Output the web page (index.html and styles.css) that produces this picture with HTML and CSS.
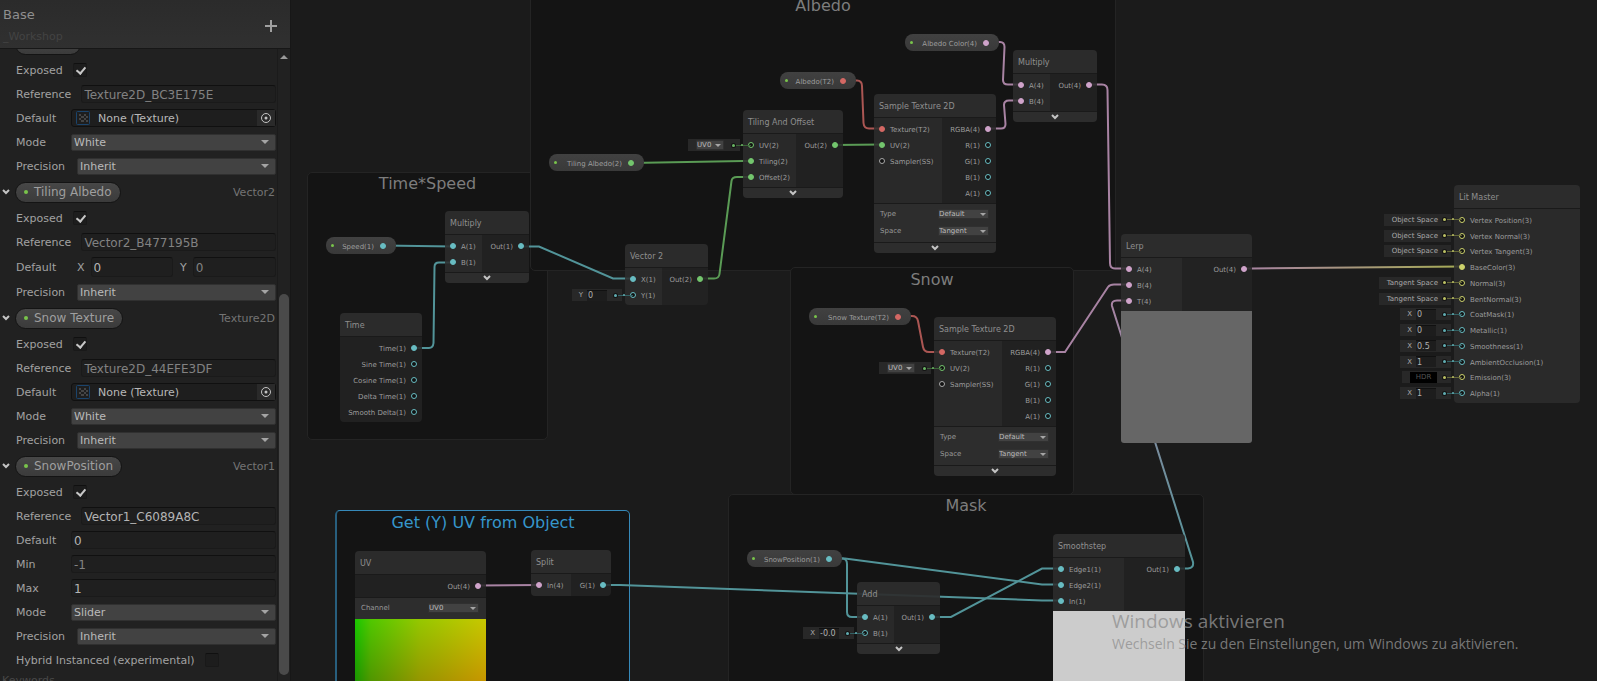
FILE: index.html
```
<!DOCTYPE html>
<html lang="en">
<head>
<meta charset="utf-8">
<title>Shader Graph</title>
<link rel="stylesheet" href="styles.css">
</head>
<body>
<div class="workspace">
<main class="canvas">
  <section class="group g-time"><h2>Time*Speed</h2></section>
  <section class="group g-albedo"><h2>Albedo</h2></section>
  <section class="group g-snow"><h2>Snow</h2></section>
  <section class="group g-mask"><h2>Mask</h2></section>
  <section class="group g-uv selected"><h2>Get (Y) UV from Object</h2></section>

  <svg class="edges" aria-hidden="true">
    <defs>
      <linearGradient id="toYellow" gradientUnits="userSpaceOnUse" x1="1244" y1="0" x2="1462" y2="0"><stop offset="0" stop-color="#a883a3"/><stop offset="1" stop-color="#a5ab55"/></linearGradient>
      <linearGradient id="toPink" gradientUnits="userSpaceOnUse" x1="0" y1="568" x2="0" y2="300"><stop offset="0" stop-color="#529499"/><stop offset="1" stop-color="#a883a3"/></linearGradient>
    </defs>
    <g class="e-teal">
      <path d="M383 245.500L453 246.500"/>
      <path d="M414 348H429Q433 348 433.500 343L434.500 267Q434.500 262.500 439 262.500H453"/>
      <path d="M521 246.500H539L613 278.500H632"/>
      <path d="M603 585H620L1042 600.500H1061"/>
      <path d="M829 558.500H845L1042 584.500H1061"/>
      <path d="M829 558.500H843Q847 559 847 564V612Q847 617 852 617H864"/>
      <path d="M932 617H951L1042 568.500H1061"/>
    </g>
    <g class="e-green">
      <path d="M631 163L743 161H751"/>
      <path d="M834 145L882 144.500"/>
      <path d="M700 278.500H714Q719 278.500 719.500 274L731.500 181Q732 177 737 177H751"/>
    </g>
    <g class="e-red">
      <path d="M843 80.500H857Q862 80.500 862 86L863.500 123Q864 128.500 869 128.500H882"/>
      <path d="M898 316H912Q917 316 918 321L923 347Q924 352 929 352H941"/>
    </g>
    <g class="e-pink">
      <path d="M986 42H1000Q1004.500 42 1004.500 47L1003 80Q1003 84.500 1008 84.500H1021"/>
      <path d="M988 128.500H1001Q1005.500 128.500 1005.500 124L1004 105Q1004 100.500 1009 100.500H1021"/>
      <path d="M1089 84.500H1102Q1107.500 84.500 1107.500 90L1110 263Q1110 268.500 1115 268.500H1128"/>
      <path d="M1047 352H1065L1108 287Q1110 284.500 1114 284.500H1128"/>
      <path d="M478 585.500L538 585"/>
      <path d="M1244 268.500H1252L1462 266.500" stroke="url(#toYellow)"/>
      <path d="M1177 568.500H1188Q1194 568 1193 562L1112 306Q1111 300.500 1117 300.500H1128" stroke="url(#toPink)"/>
    </g>
  </svg>

  <div class="token t-speed teal"><i class="exposed"></i><span>Speed(1)</span><i class="pin on"></i></div>
  <div class="token t-tiling green"><i class="exposed"></i><span>Tiling Albedo(2)</span><i class="pin on"></i></div>
  <div class="token t-albedo red"><i class="exposed"></i><span>Albedo(T2)</span><i class="pin on"></i></div>
  <div class="token t-color pink"><i class="exposed"></i><span>Albedo Color(4)</span><i class="pin on"></i></div>
  <div class="token t-snowtex red"><i class="exposed"></i><span>Snow Texture(T2)</span><i class="pin on"></i></div>
  <div class="token t-snowpos teal"><i class="exposed"></i><span>SnowPosition(1)</span><i class="pin on"></i></div>

  <article class="node n-mul1">
    <h3>Multiply</h3>
    <div class="body">
      <ul class="ins"><li class="teal"><i class="pin on"></i><span>A(1)</span></li><li class="teal"><i class="pin on"></i><span>B(1)</span></li></ul>
      <ul class="outs"><li class="teal"><span>Out(1)</span><i class="pin on"></i></li></ul>
    </div>
    <button class="fold" aria-label="Collapse"><svg viewBox="0 0 8 6"><path d="M1 1L4 4L7 1"/></svg></button>
  </article>

  <article class="node n-time">
    <h3>Time</h3>
    <div class="body">
      <ul class="outs">
        <li class="teal"><span>Time(1)</span><i class="pin on"></i></li>
        <li class="teal"><span>Sine Time(1)</span><i class="pin"></i></li>
        <li class="teal"><span>Cosine Time(1)</span><i class="pin"></i></li>
        <li class="teal"><span>Delta Time(1)</span><i class="pin"></i></li>
        <li class="teal"><span>Smooth Delta(1)</span><i class="pin"></i></li>
      </ul>
    </div>
  </article>

  <article class="node n-tao">
    <h3>Tiling And Offset</h3>
    <div class="body">
      <ul class="ins">
        <li class="green"><div class="control uv"><span class="select"><select aria-label="UV"><option>UV0</option></select></span><i class="wire"></i></div><i class="pin"></i><span>UV(2)</span></li>
        <li class="green"><i class="pin on"></i><span>Tiling(2)</span></li>
        <li class="green"><i class="pin on"></i><span>Offset(2)</span></li>
      </ul>
      <ul class="outs"><li class="green"><span>Out(2)</span><i class="pin on"></i></li></ul>
    </div>
    <button class="fold" aria-label="Collapse"><svg viewBox="0 0 8 6"><path d="M1 1L4 4L7 1"/></svg></button>
  </article>

  <article class="node n-vec">
    <h3>Vector 2</h3>
    <div class="body">
      <ul class="ins">
        <li class="teal"><i class="pin on"></i><span>X(1)</span></li>
        <li class="teal"><div class="control num"><label>Y <input value="0"></label><i class="wire"></i></div><i class="pin"></i><span>Y(1)</span></li>
      </ul>
      <ul class="outs"><li class="green"><span>Out(2)</span><i class="pin on"></i></li></ul>
    </div>
  </article>

  <article class="node n-mul2">
    <h3>Multiply</h3>
    <div class="body">
      <ul class="ins"><li class="pink"><i class="pin on"></i><span>A(4)</span></li><li class="pink"><i class="pin on"></i><span>B(4)</span></li></ul>
      <ul class="outs"><li class="pink"><span>Out(4)</span><i class="pin on"></i></li></ul>
    </div>
    <button class="fold" aria-label="Collapse"><svg viewBox="0 0 8 6"><path d="M1 1L4 4L7 1"/></svg></button>
  </article>

  <article class="node n-tex1 sample">
    <h3>Sample Texture 2D</h3>
    <div class="body">
      <ul class="ins">
        <li class="red"><i class="pin on"></i><span>Texture(T2)</span></li>
        <li class="green"><i class="pin on"></i><span>UV(2)</span></li>
        <li class="grey"><i class="pin"></i><span>Sampler(SS)</span></li>
      </ul>
      <ul class="outs">
        <li class="pink"><span>RGBA(4)</span><i class="pin on"></i></li>
        <li class="teal"><span>R(1)</span><i class="pin"></i></li>
        <li class="teal"><span>G(1)</span><i class="pin"></i></li>
        <li class="teal"><span>B(1)</span><i class="pin"></i></li>
        <li class="teal"><span>A(1)</span><i class="pin"></i></li>
      </ul>
    </div>
    <div class="settings">
      <label>Type <span class="select"><select><option>Default</option></select></span></label>
      <label>Space <span class="select"><select><option>Tangent</option></select></span></label>
    </div>
    <button class="fold" aria-label="Collapse"><svg viewBox="0 0 8 6"><path d="M1 1L4 4L7 1"/></svg></button>
  </article>

  <article class="node n-tex2 sample">
    <h3>Sample Texture 2D</h3>
    <div class="body">
      <ul class="ins">
        <li class="red"><i class="pin on"></i><span>Texture(T2)</span></li>
        <li class="green"><div class="control uv"><span class="select"><select aria-label="UV"><option>UV0</option></select></span><i class="wire"></i></div><i class="pin"></i><span>UV(2)</span></li>
        <li class="grey"><i class="pin"></i><span>Sampler(SS)</span></li>
      </ul>
      <ul class="outs">
        <li class="pink"><span>RGBA(4)</span><i class="pin on"></i></li>
        <li class="teal"><span>R(1)</span><i class="pin"></i></li>
        <li class="teal"><span>G(1)</span><i class="pin"></i></li>
        <li class="teal"><span>B(1)</span><i class="pin"></i></li>
        <li class="teal"><span>A(1)</span><i class="pin"></i></li>
      </ul>
    </div>
    <div class="settings">
      <label>Type <span class="select"><select><option>Default</option></select></span></label>
      <label>Space <span class="select"><select><option>Tangent</option></select></span></label>
    </div>
    <button class="fold" aria-label="Collapse"><svg viewBox="0 0 8 6"><path d="M1 1L4 4L7 1"/></svg></button>
  </article>

  <article class="node n-lerp">
    <h3>Lerp</h3>
    <div class="body">
      <ul class="ins">
        <li class="pink"><i class="pin on"></i><span>A(4)</span></li>
        <li class="pink"><i class="pin on"></i><span>B(4)</span></li>
        <li class="pink"><i class="pin on"></i><span>T(4)</span></li>
      </ul>
      <ul class="outs"><li class="pink"><span>Out(4)</span><i class="pin on"></i></li></ul>
    </div>
    <div class="preview flat-grey"></div>
  </article>

  <article class="node n-lit">
    <h3>Lit Master</h3>
    <div class="body">
      <ul class="ins">
        <li class="yellow"><div class="control space">Object Space<i class="wire"></i></div><i class="pin"></i><span>Vertex Position(3)</span></li>
        <li class="yellow"><div class="control space">Object Space<i class="wire"></i></div><i class="pin"></i><span>Vertex Normal(3)</span></li>
        <li class="yellow"><div class="control space">Object Space<i class="wire"></i></div><i class="pin"></i><span>Vertex Tangent(3)</span></li>
        <li class="yellow"><i class="pin on"></i><span>BaseColor(3)</span></li>
        <li class="yellow"><div class="control space">Tangent Space<i class="wire"></i></div><i class="pin"></i><span>Normal(3)</span></li>
        <li class="yellow"><div class="control space">Tangent Space<i class="wire"></i></div><i class="pin"></i><span>BentNormal(3)</span></li>
        <li class="teal"><div class="control num"><label>X <input value="0"></label><i class="wire"></i></div><i class="pin"></i><span>CoatMask(1)</span></li>
        <li class="teal"><div class="control num"><label>X <input value="0"></label><i class="wire"></i></div><i class="pin"></i><span>Metallic(1)</span></li>
        <li class="teal"><div class="control num"><label>X <input value="0.5"></label><i class="wire"></i></div><i class="pin"></i><span>Smoothness(1)</span></li>
        <li class="teal"><div class="control num"><label>X <input value="1"></label><i class="wire"></i></div><i class="pin"></i><span>AmbientOcclusion(1)</span></li>
        <li class="yellow"><div class="control hdr"><button>HDR</button><i class="wire"></i></div><i class="pin"></i><span>Emission(3)</span></li>
        <li class="teal"><div class="control num"><label>X <input value="1"></label><i class="wire"></i></div><i class="pin"></i><span>Alpha(1)</span></li>
      </ul>
    </div>
  </article>

  <article class="node n-uv">
    <h3>UV</h3>
    <div class="body"><ul class="outs"><li class="pink"><span>Out(4)</span><i class="pin on"></i></li></ul></div>
    <div class="settings"><label>Channel <span class="select"><select><option>UV0</option></select></span></label></div>
    <div class="preview uv-ramp"></div>
  </article>

  <article class="node n-split">
    <h3>Split</h3>
    <div class="body">
      <ul class="ins"><li class="pink"><i class="pin on"></i><span>In(4)</span></li></ul>
      <ul class="outs"><li class="teal"><span>G(1)</span><i class="pin on"></i></li></ul>
    </div>
  </article>

  <article class="node n-add">
    <h3>Add</h3>
    <div class="body">
      <ul class="ins">
        <li class="teal"><i class="pin on"></i><span>A(1)</span></li>
        <li class="teal"><div class="control num"><label>X <input value="-0.0"></label><i class="wire"></i></div><i class="pin"></i><span>B(1)</span></li>
      </ul>
      <ul class="outs"><li class="teal"><span>Out(1)</span><i class="pin on"></i></li></ul>
    </div>
    <button class="fold" aria-label="Collapse"><svg viewBox="0 0 8 6"><path d="M1 1L4 4L7 1"/></svg></button>
  </article>

  <article class="node n-smooth">
    <h3>Smoothstep</h3>
    <div class="body">
      <ul class="ins">
        <li class="teal"><i class="pin on"></i><span>Edge1(1)</span></li>
        <li class="teal"><i class="pin on"></i><span>Edge2(1)</span></li>
        <li class="teal"><i class="pin on"></i><span>In(1)</span></li>
      </ul>
      <ul class="outs"><li class="teal"><span>Out(1)</span><i class="pin on"></i></li></ul>
    </div>
    <div class="preview flat-light"></div>
  </article>
</main>

<aside class="blackboard">
  <header>
    <div><h1>Base</h1><p>_Workshop</p></div>
    <button class="add" aria-label="Add property"><svg viewBox="0 0 14 14"><path d="M7 1V13M1 7H13"/></svg></button>
  </header>
  <div class="viewport">
    <div class="properties">
      <section>
        <div class="prop"><span class="pill blank"></span></div>
        <label class="row">Exposed <input type="checkbox" checked></label>
        <label class="row"><span class="name">Reference</span><input class="dim" value="Texture2D_BC3E175E"></label>
        <div class="row"><span class="name">Default</span><div class="object"><svg class="tex" viewBox="0 0 14 14"><rect x=".5" y=".5" width="13" height="13" rx="1"/><path d="M3 3h2v2h-2zM8 3h2v2h-2zM5 5h3v2h-3zM10 5h2v2h-2zM3 7h2v2h-2zM8 7h2v2h-2zM5 9h3v2h-3zM10 9h2v2h-2z"/></svg><span>None (Texture)</span><button aria-label="Select texture"><svg viewBox="0 0 12 12"><circle cx="6" cy="6" r="4.500"/><circle class="dot" cx="6" cy="6" r="1.500"/></svg></button></div></div>
        <label class="row"><span class="name">Mode</span><span class="select"><select><option>White</option></select></span></label>
        <label class="row"><span class="name wide">Precision</span><span class="select"><select><option>Inherit</option></select></span></label>
      </section>
      <section>
        <div class="prop"><button class="chev" aria-label="Toggle"><svg viewBox="0 0 8 6"><path d="M1 1L4 4L7 1"/></svg></button><span class="pill"><i class="exposed"></i>Tiling Albedo</span><span class="type">Vector2</span></div>
        <label class="row">Exposed <input type="checkbox" checked></label>
        <label class="row"><span class="name">Reference</span><input class="dim" value="Vector2_B477195B"></label>
        <div class="row vec"><span class="name">Default</span><label>X <input value="0"></label><label>Y <input class="dim" value="0"></label></div>
        <label class="row"><span class="name wide">Precision</span><span class="select"><select><option>Inherit</option></select></span></label>
      </section>
      <section>
        <div class="prop"><button class="chev" aria-label="Toggle"><svg viewBox="0 0 8 6"><path d="M1 1L4 4L7 1"/></svg></button><span class="pill"><i class="exposed"></i>Snow Texture</span><span class="type">Texture2D</span></div>
        <label class="row">Exposed <input type="checkbox" checked></label>
        <label class="row"><span class="name">Reference</span><input class="dim" value="Texture2D_44EFE3DF"></label>
        <div class="row"><span class="name">Default</span><div class="object"><svg class="tex" viewBox="0 0 14 14"><rect x=".5" y=".5" width="13" height="13" rx="1"/><path d="M3 3h2v2h-2zM8 3h2v2h-2zM5 5h3v2h-3zM10 5h2v2h-2zM3 7h2v2h-2zM8 7h2v2h-2zM5 9h3v2h-3zM10 9h2v2h-2z"/></svg><span>None (Texture)</span><button aria-label="Select texture"><svg viewBox="0 0 12 12"><circle cx="6" cy="6" r="4.500"/><circle class="dot" cx="6" cy="6" r="1.500"/></svg></button></div></div>
        <label class="row"><span class="name">Mode</span><span class="select"><select><option>White</option></select></span></label>
        <label class="row"><span class="name wide">Precision</span><span class="select"><select><option>Inherit</option></select></span></label>
      </section>
      <section>
        <div class="prop"><button class="chev" aria-label="Toggle"><svg viewBox="0 0 8 6"><path d="M1 1L4 4L7 1"/></svg></button><span class="pill"><i class="exposed"></i>SnowPosition</span><span class="type">Vector1</span></div>
        <label class="row">Exposed <input type="checkbox" checked></label>
        <label class="row"><span class="name">Reference</span><input value="Vector1_C6089A8C"></label>
        <label class="row"><span class="name">Default</span><input value="0"></label>
        <label class="row"><span class="name">Min</span><input class="dim" value="-1"></label>
        <label class="row"><span class="name">Max</span><input value="1"></label>
        <label class="row"><span class="name">Mode</span><span class="select"><select><option>Slider</option></select></span></label>
        <label class="row"><span class="name wide">Precision</span><span class="select"><select><option>Inherit</option></select></span></label>
        <label class="row">Hybrid Instanced (experimental) <input type="checkbox"></label>
      </section>
      <h2 class="section-title">Keywords</h2>
    </div>
    <div class="scroller"><i class="up"></i><i class="thumb"></i></div>
  </div>
</aside>

<div class="watermark"><p class="big">Windows aktivieren</p><p>Wechseln Sie zu den Einstellungen, um Windows zu aktivieren.</p></div>
</div>
</body>
</html>
```
FILE: styles.css
```
* { box-sizing: border-box; }
body, h1, h2, h3, p, ul { margin: 0; padding: 0; font-weight: normal; }
ul { list-style: none; }
body { background: #1b1b1b; font: 11px "DejaVu Sans", sans-serif; color: #a2a2a2; }
button, input, select { font: inherit; color: inherit; margin: 0; padding: 0; border: 0; background: none; min-width: 0; }
svg { display: block; fill: none; stroke: #c4c4c4; }
select { appearance: none; width: 100%; height: 100%; }

.workspace { position: relative; height: 100vh; overflow: hidden; }
.canvas { position: absolute; inset: 0; overflow: hidden; font-size: 7px; color: #989898; }

/* port and edge colours */
.teal { color: #68bcc2; }
.green { color: #73c56d; }
.red { color: #d46864; }
.pink { color: #cfa3ca; }
.yellow { color: #cdd26c; }
.grey { color: #a8a8a8; }

.edges { position: absolute; inset: 0; width: 100%; height: 100%; }
.edges path { stroke-width: 2; }
.e-teal { stroke: #529499; }
.e-green { stroke: #5a9b55; }
.e-red { stroke: #ab5653; }
.e-pink { stroke: #a883a3; }

/* groups */
.group { position: absolute; background: #141414; border: 1px solid #242424; border-radius: 5px; padding-top: 1px; }
.group h2 { font-size: 16px; line-height: 20px; text-align: center; color: #7d7d7d; }
.group.selected { border-color: #3689b9; border-left: 2px solid #285f7e; padding-top: 2px; }
.group.selected h2 { color: #3696cb; }
.g-time { left: 307px; top: 172px; width: 241px; height: 268px; }
.g-albedo { left: 530px; top: -6px; width: 586px; height: 277px; }
.g-snow { left: 790px; top: 267px; width: 284px; height: 228px; padding-top: 2px; }
.g-mask { left: 728px; top: 494px; width: 476px; height: 400px; }
.g-uv { left: 335px; top: 510px; width: 295px; height: 400px; }

/* pins */
.pin { width: 6px; height: 6px; border: 1px solid currentColor; border-radius: 50%; flex: none; background: #111; }
.pin.on { background: currentColor; }
.exposed { width: 3px; height: 3px; border-radius: 50%; background: #79c44b; flex: none; }

/* property tokens */
.token { position: absolute; height: 17px; display: flex; align-items: center; border-radius: 8px; padding: 0 10px 0 5px; background: linear-gradient(#414141, #393939); }
.token span { flex: 1; color: #9c9c9c; text-align: right; padding: 2px 6px 0 0; }
.t-speed { left: 326px; top: 237px; width: 70px; }
.t-tiling { left: 549px; top: 154px; width: 95px; }
.t-albedo { left: 780px; top: 72px; width: 76px; }
.t-color { left: 905px; top: 34px; width: 94px; }
.t-snowtex { left: 809px; top: 308px; width: 102px; }
.t-snowpos { left: 747px; top: 550px; width: 95px; }

/* nodes */
.node { position: absolute; border-radius: 4px; }
.node h3 { height: 24px; line-height: 25px; padding-left: 5px; font-size: 8px; color: #8f8f8f; background: rgba(45, 45, 45, .93); border-bottom: 1px solid #1a1a1a; border-radius: 4px 4px 0 0; }
.node .body { display: flex; }
.ins, .outs { padding: 3px 0 2px; }
.ins { flex: none; background: rgba(45, 45, 45, .85); }
.outs { flex: 1; background: rgba(35, 35, 35, .85); }
.ins li, .outs li { position: relative; height: 16px; display: flex; align-items: center; gap: 5px; padding: 0 5px; white-space: nowrap; }
.outs li { justify-content: flex-end; }
.ins li > span, .outs li > span { color: #9c9c9c; padding-top: 2px; }
.body:last-child > :first-child { border-bottom-left-radius: 4px; }
.body:last-child > :last-child { border-bottom-right-radius: 4px; }
.fold { display: flex; justify-content: center; align-items: center; width: 100%; height: 11px; background: #2d2d2d; border-top: 1px solid #1a1a1a; border-radius: 0 0 4px 4px; }
.fold svg { width: 8px; height: 6px; }
.fold path, .chev path { stroke-width: 2; }
.settings { background: #2d2d2d; border-top: 1px solid #1a1a1a; padding: 1px 7px 3px 6px; }
.settings label { display: flex; align-items: center; justify-content: space-between; height: 17px; }
.preview { height: 132px; }
.flat-grey { background: #666; border-radius: 0 0 3px 3px; }
.flat-light { background: #ccc; }
.uv-ramp {
  background:
    linear-gradient(to right, #190000, #500000 12%, #960000 50%, #c80000),
    linear-gradient(#00c800, #009600 47%, #000);
  background-blend-mode: screen;
}

.n-mul1 { left: 445px; top: 211px; width: 84px; }
.n-mul2 { left: 1013px; top: 50px; width: 84px; }
.n-mul1 .ins, .n-mul2 .ins, .n-vec .ins, .n-add .ins { width: 37px; }
.n-time { left: 340px; top: 313px; width: 82px; }
.n-tao { left: 743px; top: 110px; width: 100px; }
.n-tao .ins { width: 53px; }
.n-vec { left: 625px; top: 244px; width: 83px; }
.n-tex1 { left: 874px; top: 94px; width: 122px; }
.n-tex2 { left: 934px; top: 317px; width: 122px; }
.sample .ins { width: 68px; }
.n-lerp { left: 1121px; top: 234px; width: 131px; }
.n-lerp .ins { width: 61px; }
.n-lit { left: 1454px; top: 185px; width: 126px; }
.n-lit .ins { width: 100%; height: 194px; display: flex; flex-direction: column; }
.n-lit .ins li { flex: 1; height: auto; }
.n-uv { left: 355px; top: 551px; width: 131px; }
.n-split { left: 531px; top: 550px; width: 80px; }
.n-split .ins { width: 40px; }
.n-split .ins, .n-split .outs, .n-uv .outs { padding-bottom: 3px; }
.n-add { left: 857px; top: 582px; width: 83px; }
.n-smooth { left: 1053px; top: 534px; width: 132px; }
.n-smooth .ins { width: 71px; }

/* drop-downs */
.select { position: relative; display: block; background: #424242; border: 1px solid #303030; border-radius: 2px; color: #bababa; }
.select::after { content: ""; position: absolute; right: 6px; top: 50%; margin-top: -2px; border: 4px solid transparent; border-top-color: #a5a5a5; border-bottom: 0; pointer-events: none; }
.canvas .select { width: 51px; height: 10px; border-radius: 1px; }
.canvas .select select { display: block; line-height: 8px; }
.canvas .select::after { right: 2px; margin-top: -1px; border-width: 3px; border-bottom: 0; }

/* inline port controls */
.control { position: absolute; right: 100%; margin-right: 3px; height: 12px; display: flex; align-items: center; background: #282828; color: #a8a8a8; }
.control.uv { padding-left: 8px; padding-right: 16px; }
.control.uv .select { width: 28px; }
.control.num label { display: flex; align-items: center; gap: 4px; padding-left: 7px; }
.control.num { padding-right: 15px; }
.control.num input { width: 20px; height: 11px; padding-left: 1px; background: #1d1d1d; border-top: 1px solid #111; font-size: 8px; color: #b0b0b0; }
.control.space { padding: 0 13px 0 8px; }
.control.hdr { padding: 0 14px 0 8px; }
.control.hdr button { width: 27px; height: 11px; background: #000; color: #555; }
.wire { position: absolute; left: 100%; margin-left: -6px; width: 17px; height: 1px; background: #666; opacity: .9; }
.wire::before, .wire::after { content: ""; position: absolute; background: currentColor; border-radius: 50%; }
.wire::before { left: -2px; top: -1px; width: 3px; height: 3px; box-shadow: 0 0 0 1px #111; }
.wire::after { left: 7px; top: -1px; width: 2px; height: 2px; }
.teal .wire { color: #68bcc2; background: #35686b; }
.green .wire { color: #73c56d; background: #3c6a39; }
.yellow .wire { color: #cdd26c; background: #6b6e3b; }

/* blackboard */
.blackboard { position: absolute; left: 0; top: 0; bottom: 0; width: 291px; display: flex; flex-direction: column; background: #212121; border-right: 1px solid #171717; overflow: hidden; }
.blackboard header { flex: none; height: 49px; display: flex; justify-content: space-between; align-items: center; padding: 3px 12px 0 3px; background: linear-gradient(#2b2b2b, #303030); border-bottom: 1px solid #171717; }
.blackboard h1 { font-size: 13px; line-height: 22px; color: #8f8f8f; }
.blackboard header p { line-height: 22px; color: #434343; }
.add svg { width: 14px; height: 14px; }
.add path { stroke: #a0a0a0; stroke-width: 2; }
.viewport { flex: 1; min-height: 0; display: flex; overflow: hidden; }
.properties { flex: 1; margin-top: -19px; }
.prop { height: 28px; display: flex; align-items: center; padding-right: 2px; line-height: 13px; }
.chev { width: 15px; height: 20px; padding-left: 2px; flex: none; }
.chev svg { width: 8px; height: 6px; }
.pill { height: 21px; display: flex; align-items: center; gap: 6px; padding: 0 8px; font-size: 12px; color: #9f9f9f; background: linear-gradient(#474747, #3b3b3b); border: 1px solid #141414; border-radius: 11px; }
.pill.blank { width: 66px; margin-left: 15px; }
.pill .exposed { width: 4px; height: 4px; }
.type { margin-left: auto; color: #747474; }
.row { height: 24px; display: flex; align-items: center; padding: 0 1px 0 16px; gap: 10px; }
.name { min-width: 45px; }
.name.wide { min-width: 51px; }
.row > input:not([type]), .vec input { flex: 1; height: 18px; padding: 1px 2px 0; font-size: 12px; color: #b4b4b4; background: #1f1f1f; border: 1px solid #1a1a1a; border-top-color: #101010; border-radius: 3px; }
.row > input.dim, .vec input.dim { color: #828282; }
.row .select { flex: 1; height: 17px; }
.row select { padding-left: 2px; }
.vec { height: 26px; gap: 7px; }
.vec .name { margin-right: 9px; }
.vec label { flex: 1; display: flex; align-items: center; gap: 6px; }
.vec input { width: 40px; height: 20px; }
input[type="checkbox"] { appearance: none; width: 14px; height: 14px; background: #1d1d1d; border: 1px solid #191919; border-top-color: #101010; border-radius: 2px; position: relative; }
input[type="checkbox"]:checked::after { content: ""; position: absolute; left: 4px; top: 1px; width: 4px; height: 7px; border: solid #c8c8c8; border-width: 0 2px 2px 0; transform: rotate(40deg); }
.object { flex: 1; height: 18px; display: flex; align-items: center; gap: 8px; padding-left: 4px; background: #1e1e1e; border: 1px solid #101010; border-radius: 3px; color: #b8b8b8; }
.object .tex { width: 14px; height: 14px; }
.tex rect { stroke: #1b446c; }
.tex path { fill: #454545; stroke: none; }
.object button { margin-left: auto; width: 18px; height: 16px; padding: 2px 3px; background: #2a2a2a; }
.object button svg { width: 12px; height: 12px; }
.object .dot { fill: #c4c4c4; stroke: none; }
.section-title { padding-left: 2px; margin-top: 2px; font-size: 11px; line-height: 13px; color: #484848; }
.scroller { width: 13px; flex: none; display: flex; flex-direction: column; align-items: center; border-left: 1px solid #1b1b1b; padding: 6px 0; }
.up { border: 4px solid transparent; border-bottom-color: #999; border-top: 0; }
.thumb { width: 10px; flex: 1; margin-top: 235px; border-radius: 5px; background: #4a4a4a; }

.watermark { position: absolute; left: 1112px; right: 0; bottom: 27px; font-family: "Open Sans", sans-serif; font-size: 14px; line-height: 20px; color: rgba(145, 145, 145, .8); white-space: nowrap; pointer-events: none; }
.watermark .big { font-size: 19px; line-height: 25px; }
```
